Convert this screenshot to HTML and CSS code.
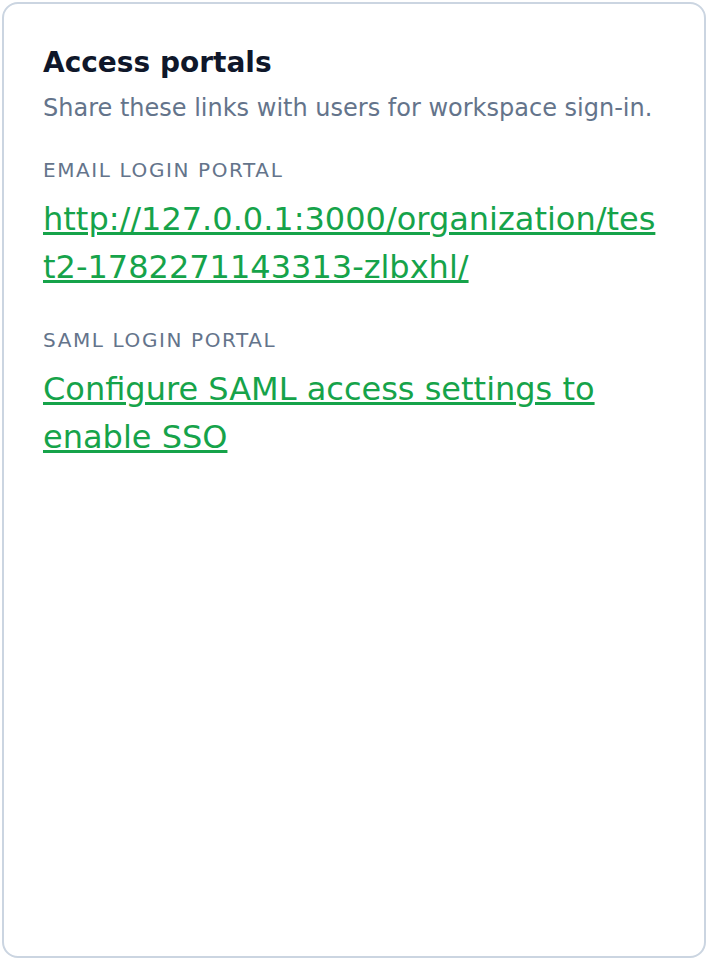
FILE: index.html
```html
<!DOCTYPE html>
<html>
<head>
	<title>Access portals</title>
	<link rel="stylesheet" href="styles.css">
</head>
<body>

<div class="card">
	<div class="header">
		<h2>Access portals</h2>
		<p class="hint">Share these links with users for workspace sign-in.</p>
	</div>

	<div class="portals">
		<div class="portal">
			<div class="label">Email login portal</div>
			<a href="http://127.0.0.1:3000/organization/test2-1782271143313-zlbxhl/">http://127.0.0.1:3000/organization/test2-1782271143313-zlbxhl/</a>
		</div>

		<div class="portal">
			<div class="label">SAML login portal</div>
			<a href="#">Configure SAML access settings to enable SSO</a>
		</div>
	</div>
</div>

</body>
</html>
```

FILE: styles.css
```css
html, body {
	height: 100%;
}

body {
	margin: 0;
	padding: 2px;
	box-sizing: border-box;
	font-family: "DejaVu Sans", sans-serif;
	background: white;
}

.card {
	box-sizing: border-box;
	height: 100%;
	border: 2px solid #cbd5e1;
	border-radius: 16px;
	padding: 41px 39px;
}

h2 {
	margin: 0;
	font-size: 28px;
	line-height: 1.3;
	color: #0f172a;
}

.hint {
	margin: 9px 0 0 0;
	font-size: 24px;
	line-height: 1.5;
	color: #64748b;
}

.portals {
	display: flex;
	flex-direction: column;
	gap: 34px;
	margin-top: 29px;
}

.label {
	font-size: 20px;
	line-height: 1.5;
	letter-spacing: 0.08em;
	text-transform: uppercase;
	color: #64748b;
}

.portal a {
	display: block;
	margin-top: 10px;
	font-size: 32px;
	line-height: 1.5;
	color: #16a34a;
	overflow-wrap: anywhere;
}
```
